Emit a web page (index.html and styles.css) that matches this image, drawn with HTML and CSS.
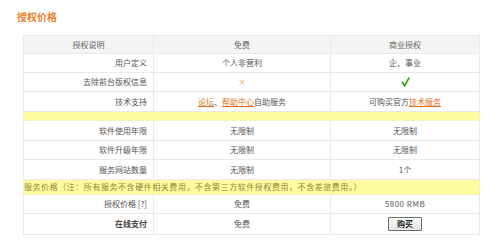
FILE: index.html
```html
<!DOCTYPE html>
<html lang="zh">
<head>
<meta charset="utf-8">
<link rel="stylesheet" href="styles.css">
</head>
<body>
<div class="page">
  <h2 class="title">授权价格</h2>
  <table class="price">
    <colgroup><col class="c1"><col class="c2"><col class="c3"></colgroup>
    <tr class="head"><td>授权说明</td><td>免费</td><td>商业授权</td></tr>
    <tr class="r"><td class="lbl">用户定义</td><td>个人非营利</td><td>企、事业</td></tr>
    <tr class="r"><td class="lbl">去除前台版权信息</td><td><span class="cross">×</span></td><td><svg class="check" width="9" height="10" viewBox="0 0 9 10"><path d="M1 4.5 L3.6 9 L8.2 0.5" fill="none" stroke="#3c9a1c" stroke-width="1.6" stroke-linejoin="miter"/></svg></td></tr>
    <tr class="r r20"><td class="lbl">技术支持</td><td><a class="lnk">论坛</a>、<a class="lnk">帮助中心</a>自助服务</td><td>可购买官方<a class="lnk">技术服务</a></td></tr>
    <tr class="band"><td colspan="3"></td></tr>
    <tr class="r r20"><td class="lbl">软件使用年限</td><td>无限制</td><td>无限制</td></tr>
    <tr class="r"><td class="lbl">软件升级年限</td><td>无限制</td><td>无限制</td></tr>
    <tr class="r r20"><td class="lbl">服务网站数量</td><td>无限制</td><td>1个</td></tr>
    <tr class="band note"><td colspan="3">服务价格（注：所有服务不含硬件相关费用，不含第三方软件授权费用，不含差旅费用。）</td></tr>
    <tr class="r"><td class="lbl">授权价格 [?]</td><td>免费</td><td class="num">5800 RMB</td></tr>
    <tr class="r r21"><td class="lbl bold">在线支付</td><td>免费</td><td><button class="buy">购买</button></td></tr>
  </table>
</div>
</body>
</html>
```
FILE: styles.css
```css
html, body { margin: 0; padding: 0; background: #fff; }
body {
  font-family: "Noto Sans CJK SC", "Noto Sans", sans-serif;
  font-size: 8px;
  color: #555;
}
.page { padding: 9px 0 0 17px; }
.title {
  margin: 0 0 10px 0;
  font-size: 10px;
  line-height: 16px;
  font-weight: bold;
  color: #e8812b;
}
.price {
  margin-left: 6px;
  border-collapse: collapse;
  table-layout: fixed;
  width: 456px;
}
.c1 { width: 130px; }
.c2 { width: 177px; }
.c3 { width: 149px; }
.price td {
  border: 1px solid #e9e9e9;
  padding: 0;
  text-align: center;
  line-height: 10px;
  height: 18px;
}
.head td { background: #f4f4f4; height: 17px; color: #666; }
.r td { height: 18px; }
.r20 td { height: 19px; }
.r21 td { height: 20px; }
.price td.lbl { text-align: right; padding-right: 6px; }
.bold { font-weight: bold; color: #444; }
.band td { background: #fdfd9f; height: 8px; border-color: #f3f3c0; }
.band.note td {
  height: 14px;
  text-align: left;
  color: #9a7d3a;
  padding-left: 0;
  letter-spacing: 0.55px;
}
.cross { color: #f09a3a; font-size: 8px; }
.check { display: inline-block; vertical-align: middle; }
.lnk { color: #e0701c; text-decoration: underline; }
.num { letter-spacing: 0.5px; }
.buy {
  font-family: "Noto Sans CJK SC", sans-serif;
  font-size: 8px;
  font-weight: bold;
  color: #222;
  width: 34px;
  height: 14px;
  padding: 0;
  line-height: 10px;
  background: linear-gradient(#fafafa, #e4e4e4);
  border: 1px solid #707070;
  border-radius: 1px;
  vertical-align: middle;
}
```
